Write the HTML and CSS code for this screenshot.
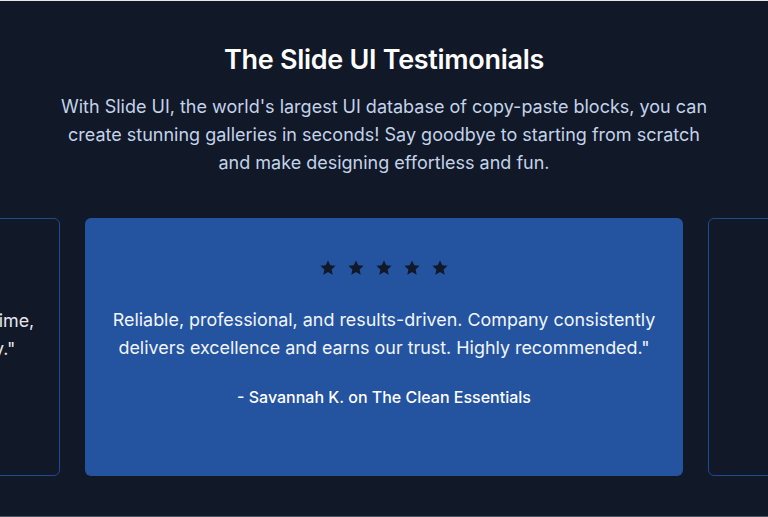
FILE: index.html
```html
<!DOCTYPE html>
<html lang="en">
<head>
<meta charset="utf-8">
<title>The Slide UI Testimonials</title>
<link rel="stylesheet" href="styles.css">
</head>
<body>
<section class="page">
  <h2 class="title">The Slide UI Testimonials</h2>
  <p class="lead">With Slide UI, the world's largest UI database of copy-paste blocks, you can create stunning galleries in seconds! Say goodbye to starting from scratch and make designing effortless and fun.</p>
  <div class="track">
    <article class="card card-side">
      <div class="stars" aria-label="5 stars">
        <svg viewBox="0 0 20 20"><path d="M10 1.6l2.5 5.4 5.9.6-4.4 4 1.2 5.8L10 14.5l-5.2 2.9L6 11.6l-4.4-4 5.9-.6z"/></svg>
        <svg viewBox="0 0 20 20"><path d="M10 1.6l2.5 5.4 5.9.6-4.4 4 1.2 5.8L10 14.5l-5.2 2.9L6 11.6l-4.4-4 5.9-.6z"/></svg>
        <svg viewBox="0 0 20 20"><path d="M10 1.6l2.5 5.4 5.9.6-4.4 4 1.2 5.8L10 14.5l-5.2 2.9L6 11.6l-4.4-4 5.9-.6z"/></svg>
        <svg viewBox="0 0 20 20"><path d="M10 1.6l2.5 5.4 5.9.6-4.4 4 1.2 5.8L10 14.5l-5.2 2.9L6 11.6l-4.4-4 5.9-.6z"/></svg>
        <svg viewBox="0 0 20 20"><path d="M10 1.6l2.5 5.4 5.9.6-4.4 4 1.2 5.8L10 14.5l-5.2 2.9L6 11.6l-4.4-4 5.9-.6z"/></svg>
      </div>
      <p class="quote"><span class="line">Exceptional quality and great attention to details, always on time,</span><span class="line">a trusted partner for our team. We recommend them highly."</span></p>
      <p class="author">- Michael R. on Bright Home Services</p>
    </article>
    <article class="card card-active">
      <div class="stars" aria-label="5 stars">
        <svg viewBox="0 0 20 20"><path d="M10 1.6l2.5 5.4 5.9.6-4.4 4 1.2 5.8L10 14.5l-5.2 2.9L6 11.6l-4.4-4 5.9-.6z"/></svg>
        <svg viewBox="0 0 20 20"><path d="M10 1.6l2.5 5.4 5.9.6-4.4 4 1.2 5.8L10 14.5l-5.2 2.9L6 11.6l-4.4-4 5.9-.6z"/></svg>
        <svg viewBox="0 0 20 20"><path d="M10 1.6l2.5 5.4 5.9.6-4.4 4 1.2 5.8L10 14.5l-5.2 2.9L6 11.6l-4.4-4 5.9-.6z"/></svg>
        <svg viewBox="0 0 20 20"><path d="M10 1.6l2.5 5.4 5.9.6-4.4 4 1.2 5.8L10 14.5l-5.2 2.9L6 11.6l-4.4-4 5.9-.6z"/></svg>
        <svg viewBox="0 0 20 20"><path d="M10 1.6l2.5 5.4 5.9.6-4.4 4 1.2 5.8L10 14.5l-5.2 2.9L6 11.6l-4.4-4 5.9-.6z"/></svg>
      </div>
      <p class="quote">Reliable, professional, and results-driven. Company consistently delivers excellence and earns our trust. Highly recommended."</p>
      <p class="author">- Savannah K. on The Clean Essentials</p>
    </article>
    <article class="card card-side">
      <div class="stars" aria-label="5 stars">
        <svg viewBox="0 0 20 20"><path d="M10 1.6l2.5 5.4 5.9.6-4.4 4 1.2 5.8L10 14.5l-5.2 2.9L6 11.6l-4.4-4 5.9-.6z"/></svg>
        <svg viewBox="0 0 20 20"><path d="M10 1.6l2.5 5.4 5.9.6-4.4 4 1.2 5.8L10 14.5l-5.2 2.9L6 11.6l-4.4-4 5.9-.6z"/></svg>
        <svg viewBox="0 0 20 20"><path d="M10 1.6l2.5 5.4 5.9.6-4.4 4 1.2 5.8L10 14.5l-5.2 2.9L6 11.6l-4.4-4 5.9-.6z"/></svg>
        <svg viewBox="0 0 20 20"><path d="M10 1.6l2.5 5.4 5.9.6-4.4 4 1.2 5.8L10 14.5l-5.2 2.9L6 11.6l-4.4-4 5.9-.6z"/></svg>
        <svg viewBox="0 0 20 20"><path d="M10 1.6l2.5 5.4 5.9.6-4.4 4 1.2 5.8L10 14.5l-5.2 2.9L6 11.6l-4.4-4 5.9-.6z"/></svg>
      </div>
      <p class="quote"><span class="line">Friendly staff and fair prices.</span><span class="line">Simple and stress-free."</span></p>
      <p class="author">- Daniel P. on Greenway</p>
    </article>
  </div>
</section>
</body>
</html>
```
FILE: styles.css
```css
* { box-sizing: border-box; }
html, body { margin: 0; padding: 0; }
body {
  background: #111827;
  font-family: Inter, "Noto Sans", sans-serif;
  overflow: hidden;
}
.page {
  height: 517px;
  border-top: 1px solid #e5e7eb;
  border-bottom: 1px solid #4b5563;
  background: #111827;
  padding-top: 42px;
  display: flex;
  flex-direction: column;
  align-items: center;
  overflow: hidden;
}
.title {
  margin: 0;
  font-size: 27px;
  line-height: 34px;
  font-weight: 600;
  color: #ffffff;
  letter-spacing: -0.3px;
}
.lead {
  margin: 16px 0 0;
  max-width: 650px;
  text-align: center;
  font-size: 18px;
  line-height: 28px;
  color: #c3d3ea;
}
.track {
  margin-top: 41px;
  width: 100%;
  display: flex;
  justify-content: center;
  gap: 25px;
}
.card {
  flex: 0 0 598px;
  height: 258px;
  border-radius: 6px;
  padding: 40px 4px 0;
  display: flex;
  flex-direction: column;
  align-items: center;
  text-align: center;
}
.card-side {
  border: 1px solid #1e4b8f;
  background: #111827;
  color: #e5e7eb;
}
.card-side .stars svg { fill: #111827; }
.card-side .author { color: #111827; }
.card-active {
  background: #2453a0;
  color: #f1f5fb;
}
.stars {
  display: flex;
  gap: 10px;
  height: 20px;
  align-items: center;
}
.stars svg {
  width: 18px;
  height: 18px;
  fill: #111827;
}
.quote {
  margin: 28px 0 0;
  font-size: 17.9px;
  line-height: 28px;
}
.line {
  display: block;
  white-space: nowrap;
}
.author {
  margin: 24px 0 0;
  font-size: 16px;
  font-weight: 500;
  line-height: 22px;
  color: #ffffff;
}
```
